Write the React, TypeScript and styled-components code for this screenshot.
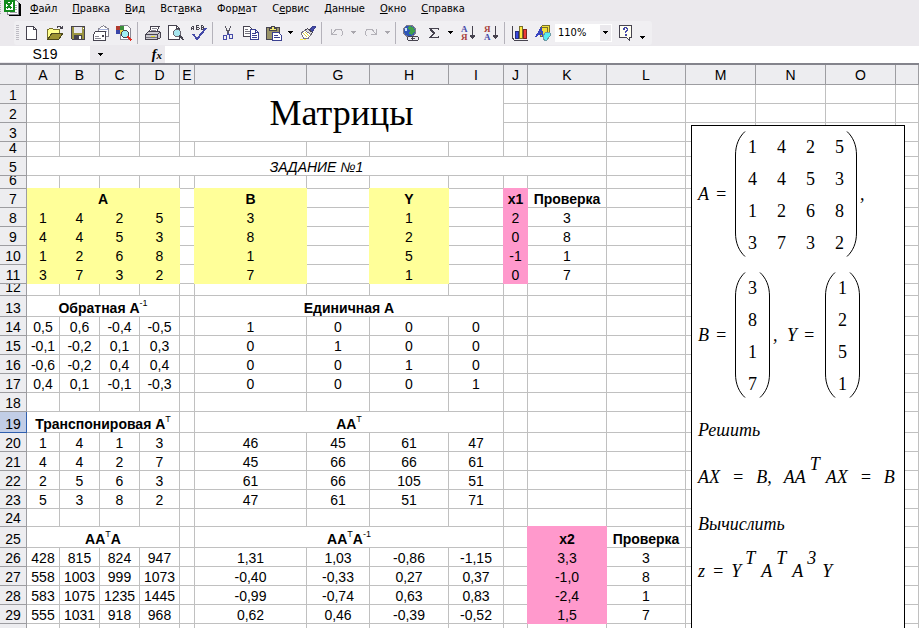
import React, { ReactNode } from 'react';
import styled, { createGlobalStyle, css } from 'styled-components';

const GRID = '#c0c0c0';
const CHROME = '#ebe9ed';
const HEAD = '#ededf0';
const HEAD_LINE = '#9d9da1';
const YELLOW = '#ffff99';
const PINK = '#ff99cc';

const GlobalStyle = createGlobalStyle`
  *, *::before, *::after { box-sizing: border-box; }
  html, body, #root { height: 100%; }
  body {
    margin: 0;
    overflow: hidden;
    background: #fff;
    color: #000;
    font-family: 'Liberation Sans', Arial, sans-serif;
  }
  button, input, select { font: inherit; color: inherit; border: 0; margin: 0; padding: 0; background: transparent; }
`;

const Window = styled.div`
  display: flex;
  flex-direction: column;
  height: 100vh;
  background: ${CHROME};
`;

const MenuBar = styled.nav`
  display: flex;
  align-items: center;
  height: 20px;
  flex: none;
  font: 11px/14px 'DejaVu Sans Condensed', 'DejaVu Sans', Tahoma, sans-serif;
`;

const BookIcon = styled.span`
  display: flex;
  width: 22px;
  height: 20px;
`;

const MenuItem = styled.button`
  height: 18px;
  padding: 0 7px 2px 8px;
  white-space: nowrap;
`;

const ToolRow = styled.div`
  display: flex;
  height: 26px;
  padding: 1px 0 1px 14px;
  flex: none;
`;

const ToolBar = styled.div`
  display: flex;
  align-items: center;
  padding: 0 4px 0 6px;
  border-radius: 3px;
  background: #f0eff2;
  position: relative;
`;

const Handle = styled.span`
  position: absolute;
  left: 2px;
  top: 4px;
  bottom: 4px;
  width: 3px;
  background: repeating-linear-gradient(#bdbbc3 0 1px, transparent 1px 2px);
`;

const ToolButton = styled.button`
  display: flex;
  align-items: center;
  justify-content: center;
  width: 23px;
  height: 22px;
`;

const DropButton = styled.button<{ $off?: boolean; $low?: boolean }>`
  display: flex;
  align-items: ${p => (p.$low ? 'flex-end' : 'center')};
  justify-content: center;
  width: 11px;
  height: 22px;
  padding-bottom: ${p => (p.$low ? 4 : 0)}px;
  color: ${p => (p.$off ? '#a9a7ad' : '#000')};
`;

const Divider = styled.span`
  width: 1px;
  height: 22px;
  margin: 0 3px 0 2px;
  background: #b4b2ba;
`;

const ZoomBox = styled.label`
  display: flex;
  align-items: center;
  position: relative;
  width: 57px;
  height: 18px;
  margin: 0 2px 0 1px;
  border: 1px solid #fff;
  background: linear-gradient(to left, ${CHROME} 11px, #fff 11px);
  svg { position: absolute; right: 2px; pointer-events: none; }
`;

const ZoomSelect = styled.select`
  appearance: none;
  width: 100%;
  padding-left: 2px;
  font: 11px/16px 'DejaVu Sans Condensed', 'DejaVu Sans', sans-serif;
`;

const FormulaRow = styled.div`
  display: flex;
  height: 17px;
  flex: none;
`;

const NameInput = styled.input`
  width: 90px;
  height: 16px;
  background: #fff;
  text-align: center;
  font-size: 14px;
`;

const NameDrop = styled.button`
  width: 20px;
  display: flex;
  align-items: center;
  justify-content: center;
`;

const FxButton = styled.button`
  width: 55px;
  padding: 0 3px 0 0;
  text-align: right;
  font: italic bold 14px/15px 'Liberation Serif', serif;
  span { font-size: 11px; }
`;

const FormulaInput = styled.input`
  flex: 1;
  min-width: 0;
  background: #fff;
`;

const SheetArea = styled.main`
  position: relative;
  flex: 1;
  min-height: 0;
  overflow: hidden;
  border-top: 2px solid #84848c;
  background: #fff;
`;

const Table = styled.table`
  width: 100%;
  table-layout: fixed;
  border-collapse: separate;
  border-spacing: 0;
  font-size: 14px;
  line-height: 16px;
`;

const ColHead = styled.th`
  height: 20px;
  padding: 0;
  border-right: 1px solid ${HEAD_LINE};
  border-bottom: 1px solid ${HEAD_LINE};
  background: ${HEAD};
  font-weight: 400;
`;

const RowHead = styled.th<{ $active?: boolean }>`
  position: relative;
  z-index: 1;
  padding: 0;
  font-weight: 400;
  border-right: 1px solid ${HEAD_LINE};
  border-bottom: 1px solid ${p => (p.$active ? '#2f5fae' : HEAD_LINE)};
  border-right-color: ${p => (p.$active ? '#2f5fae' : HEAD_LINE)};
  background: ${p => (p.$active ? '#c1cde6' : HEAD)};
`;

type Look = { $fill?: string; $bold?: boolean; $italic?: boolean; $title?: boolean };

const Cell = styled.td<Look>`
  padding: 0;
  border-right: 1px solid ${GRID};
  border-bottom: 1px solid ${GRID};
  font-weight: ${p => (p.$bold ? 700 : 400)};
  font-style: ${p => (p.$italic ? 'italic' : 'normal')};
  ${p =>
    p.$fill &&
    css`
      background: ${p.$fill};
      border-color: ${p.$fill};
      box-shadow: -1px 0 ${p.$fill}, 0 -1px ${p.$fill}, -1px -1px ${p.$fill};
    `}
  ${p =>
    p.$title &&
    css`
      text-align: center;
      vertical-align: middle;
      font: 36px/56px 'Liberation Serif', 'Times New Roman', serif;
    `}
  sup {
    font-size: 9px;
    font-weight: 400;
    line-height: 0;
    vertical-align: 7px;
  }
`;

const Content = styled.div<{ $h: number }>`
  display: flex;
  align-items: flex-end;
  justify-content: center;
  height: ${p => p.$h - 1}px;
  overflow: hidden;
  white-space: nowrap;
`;

const COLUMNS: [string, number | undefined][] = [
  ['A', 33], ['B', 40], ['C', 40], ['D', 40], ['E', 15], ['F', 112], ['G', 63], ['H', 79],
  ['I', 55], ['J', 24], ['K', 79], ['L', 79], ['M', 70], ['N', 70], ['O', 70], ['', undefined],
];

type CellSpec = {
  v: ReactNode;
  span?: number;
  rows?: number;
  fill?: string;
  bold?: boolean;
  italic?: boolean;
  title?: boolean;
};
type RowSpec = { h: number; cells?: Record<string, CellSpec>; covered?: string };

const values = (letters: string, line: string): Record<string, CellSpec> => {
  const parts = line.split(' ');
  return Object.fromEntries(letters.split('').map((l, i) => [l, { v: parts[i] }]));
};

const task = (a: string, b: string, y: string, x: string, check: string): RowSpec => {
  const cells = values('ABCDFHJK', [a, b, y, x, check].join(' '));
  'ABCDFH'.split('').forEach(l => (cells[l].fill = YELLOW));
  cells.J.fill = PINK;
  return { h: 19, cells };
};

const solved = (line: string): RowSpec => {
  const cells = values('ABCDFGHIKL', line);
  cells.K.fill = PINK;
  return { h: 19, cells };
};

const plain = (line: string): RowSpec => ({ h: 19, cells: values('ABCDFGHI', line) });

const ROWS: RowSpec[] = [
  { h: 19, cells: { E: { v: 'Матрицы', span: 5, rows: 3, title: true } } },
  { h: 19, covered: 'EFGHI' },
  { h: 19, covered: 'EFGHI' },
  { h: 15 },
  { h: 19, cells: { A: { v: 'ЗАДАНИЕ №1', span: 11, italic: true } } },
  { h: 13 },
  {
    h: 19,
    cells: {
      A: { v: 'A', span: 4, fill: YELLOW, bold: true },
      F: { v: 'B', fill: YELLOW, bold: true },
      H: { v: 'Y', fill: YELLOW, bold: true },
      J: { v: 'x1', fill: PINK, bold: true },
      K: { v: 'Проверка', bold: true },
    },
  },
  task('1 4 2 5', '3', '1', '2', '3'),
  task('4 4 5 3', '8', '2', '0', '8'),
  task('1 2 6 8', '1', '5', '-1', '1'),
  task('3 7 3 2', '7', '1', '0', '7'),
  { h: 12 },
  {
    h: 21,
    cells: {
      A: { v: <span>Обратная A<sup>-1</sup></span>, span: 4, bold: true },
      F: { v: 'Единичная A', span: 4, bold: true },
    },
  },
  plain('0,5 0,6 -0,4 -0,5 1 0 0 0'),
  plain('-0,1 -0,2 0,1 0,3 0 1 0 0'),
  plain('-0,6 -0,2 0,4 0,4 0 0 1 0'),
  plain('0,4 0,1 -0,1 -0,3 0 0 0 1'),
  { h: 19 },
  {
    h: 21,
    cells: {
      A: { v: <span>Транспонировая A<sup>T</sup></span>, span: 4, bold: true },
      F: { v: <span>AA<sup>T</sup></span>, span: 4, bold: true },
    },
  },
  plain('1 4 1 3 46 45 61 47'),
  plain('4 4 2 7 45 66 66 61'),
  plain('2 5 6 3 61 66 105 51'),
  plain('5 3 8 2 47 61 51 71'),
  { h: 18 },
  {
    h: 21,
    cells: {
      A: { v: <span>AA<sup>T</sup>A</span>, span: 4, bold: true },
      F: { v: <span>AA<sup>T</sup>A<sup>-1</sup></span>, span: 4, bold: true },
      K: { v: 'x2', fill: PINK, bold: true },
      L: { v: 'Проверка', bold: true },
    },
  },
  solved('428 815 824 947 1,31 1,03 -0,86 -1,15 3,3 3'),
  solved('558 1003 999 1073 -0,40 -0,33 0,27 0,37 -1,0 8'),
  solved('583 1075 1235 1445 -0,99 -0,74 0,63 0,83 -2,4 1'),
  solved('555 1031 918 968 0,62 0,46 -0,39 -0,52 1,5 7'),
  { h: 19 },
];

const ACTIVE_ROW = 19;

function Row({ spec, n }: { spec: RowSpec; n: number }) {
  const tds: ReactNode[] = [];
  for (let i = 0; i < COLUMNS.length; ) {
    const letter = COLUMNS[i][0];
    if (letter && spec.covered?.includes(letter)) {
      i += 1;
      continue;
    }
    const c = spec.cells?.[letter];
    tds.push(
      <Cell
        key={i}
        colSpan={c?.span}
        rowSpan={c?.rows}
        $fill={c?.fill}
        $bold={c?.bold}
        $italic={c?.italic}
        $title={c?.title}
      >
        {c?.title ? c.v : c && <Content $h={spec.h}>{c.v}</Content>}
      </Cell>,
    );
    i += c?.span ?? 1;
  }
  return (
    <tr>
      <RowHead scope="row" $active={n === ACTIVE_ROW}>
        <Content $h={spec.h}>{n}</Content>
      </RowHead>
      {tds}
    </tr>
  );
}

/* Drawing object with the task text */

const Drawing = styled.aside`
  position: absolute;
  left: 691px;
  top: 60px;
  width: 214px;
  min-height: 560px;
  padding: 5px 0 0 6px;
  border: 1px solid #000;
  background: #fff;
  font: italic 18px/20px 'Liberation Serif', 'Times New Roman', serif;
  white-space: nowrap;
`;

const Equation = styled.div`
  display: flex;
  align-items: center;
  height: 126px;
  & + & { margin-top: 15px; }
`;

const Lead = styled.span<{ $w: number }>`
  display: flex;
  gap: 6px;
  width: ${p => p.$w}px;
`;

const Comma = styled.span`
  width: 17px;
  padding-left: 3px;
`;

const MatrixBox = styled.span`
  display: flex;
  align-items: center;
`;

const MatrixGrid = styled.span<{ $cols: number }>`
  display: grid;
  grid-template-columns: repeat(${p => p.$cols}, 9px);
  column-gap: 20px;
  padding: 2px 2px 0;
  font-style: normal;
  line-height: 32px;
`;

const Notes = styled.div`
  padding-top: 9px;
`;

const Line = styled.p<{ $gap?: number }>`
  display: flex;
  gap: ${p => p.$gap ?? 0}px;
  margin: 0;
  line-height: 47px;
  sup {
    font-size: 18px;
    line-height: 0;
    vertical-align: 13px;
    padding: 0 6px 0 4px;
  }
`;

function Paren({ right }: { right?: boolean }) {
  return (
    <svg width="11" height="126" viewBox="0 0 11 126" fill="none" stroke="#000" aria-hidden="true">
      <path d={right ? 'M1 .5C7 6 10.500 14 10.500 24V102C10.500 112 7 120 1 125.500' : 'M10 .5C4 6 .5 14 .5 24V102C.5 112 4 120 10 125.500'} />
    </svg>
  );
}

function Matrix({ rows }: { rows: string[] }) {
  return (
    <MatrixBox>
      <Paren />
      <MatrixGrid $cols={rows[0].length}>
        {rows.join('').split('').map((d, i) => <span key={i}>{d}</span>)}
      </MatrixGrid>
      <Paren right />
    </MatrixBox>
  );
}

function TaskDrawing() {
  return (
    <Drawing>
      <Equation>
        <Lead $w={37}><span>A</span><span>=</span></Lead>
        <Matrix rows={['1425', '4453', '1268', '3732']} />
        <Comma>,</Comma>
      </Equation>
      <Equation>
        <Lead $w={37}><span>B</span><span>=</span></Lead>
        <Matrix rows={['3', '8', '1', '7']} />
        <Comma>,</Comma>
        <Lead $w={38}><span>Y</span><span>=</span></Lead>
        <Matrix rows={['1', '2', '5', '1']} />
      </Equation>
      <Notes>
        <Line>Решить</Line>
        <Line $gap={12}><span>AX</span><span>=</span><span>B,</span><span>AA<sup>T</sup>AX</span><span>=</span><span>B</span></Line>
        <Line>Вычислить</Line>
        <Line $gap={7}><span>z</span><span>=</span><span>Y<sup>T</sup>A<sup>T</sup>A<sup>3</sup>Y</span></Line>
      </Notes>
    </Drawing>
  );
}

/* Icons */

const Caret = () => (
  <svg width="7" height="4" viewBox="0 0 7 4" shapeRendering="crispEdges" aria-hidden="true">
    <path d="M1 0h5v1H1zM2 1h3v1H2zM3 2h1v1H3z" fill="currentColor" />
  </svg>
);

function Icon({ children }: { children: ReactNode }) {
  return (
    <svg width="16" height="16" viewBox="0 0 16 16" fill="none" shapeRendering="crispEdges" aria-hidden="true">
      {children}
    </svg>
  );
}

const Letter = styled.text<{ $mono?: boolean }>`
  font-family: ${p => (p.$mono ? "'Liberation Sans'" : "'Liberation Serif'")}, serif;
  font-weight: 700;
`;

const icons: Record<string, ReactNode> = {
  new: <Icon><path d="M2.500 1.500h7l3 3v10h-10z" fill="#fff" stroke="#46434f" /><path d="M9.500 1.500v3h3" stroke="#46434f" /></Icon>,
  open: (
    <Icon>
      <path d="M.5 13.500v-9h1l1-1h3l1 1h6v4" fill="#ffff8c" stroke="#77702c" />
      <path d="M1 14l4-6h11l-4 6z" fill="#9c9331" stroke="#4d4a1c" />
      <path d="M9.500 2.500h1v-1h3v1h1v1M15.500 1v3M13 3.500h3" stroke="#46434f" />
    </Icon>
  ),
  save: (
    <Icon>
      <path d="M1.500 1.500h13v13h-12l-1-1z" fill="#9a9440" stroke="#46434f" />
      <path d="M4 2h8v6H4z" fill="#e9e8ef" /><path d="M4 10h8v4H4z" fill="#46434f" /><path d="M9 11h2v3H9z" fill="#fff" />
      <path d="M13 3h1v1h-1z" fill="#fff" />
    </Icon>
  ),
  mail: (
    <Icon>
      <path d="M5.500 9V4l5-3.500 5 3.500v7h-5" fill="#fff" stroke="#8a8894" /><path d="M6 4h9M7 6h7" stroke="#a8b4dd" />
      <path d="M.5 9.500l2-3h10v9H.5z" fill="#fff" stroke="#46434f" /><path d="M2 11.500h4M2 13.500h6" stroke="#8a8894" />
      <path d="M9 10h2v2H9z" fill="#46434f" />
    </Icon>
  ),
  research: (
    <Icon>
      <path d="M4.500 .5h7l3 3v11h-10z" fill="#fff" stroke="#8a8894" />
      <path d="M0 1h4v4H0z" fill="#b03a2e" /><path d="M4 1h4v4H4z" fill="#3c8f3c" />
      <path d="M0 5h4v4H0z" fill="#3945a8" /><path d="M4 5h4v4H4z" fill="#e2d63c" />
      <circle cx="9" cy="9" r="3.500" fill="#9feef2" stroke="#46434f" /><path d="M11.500 11.500l4 4" stroke="#e02b20" strokeWidth="2" />
    </Icon>
  ),
  print: (
    <Icon>
      <path d="M4.500 6.500l1.500-5h8l-2 5" fill="#fff" stroke="#46434f" /><path d="M7 3.500h5M6 5.500h5" stroke="#8a8894" />
      <path d="M.5 9.500l3-3h11l1 1v5l-3 2H.5z" fill="#c9c8ce" stroke="#46434f" /><path d="M1 9.500h11l3-2M12.500 10v4" stroke="#46434f" />
      <path d="M6 11h4v1H6z" fill="#e5dc2e" /><path d="M1 12h11v1H1z" fill="#77757f" />
    </Icon>
  ),
  preview: (
    <Icon>
      <path d="M.5 .5h8l3 3v11H.5z" fill="#fff" stroke="#46434f" /><path d="M8.500 .5v3h3" stroke="#46434f" />
      <circle cx="9" cy="8" r="3.500" fill="#a6e6ee" stroke="#66646e" /><path d="M11.500 10.500l4 4.500" stroke="#46434f" strokeWidth="2" />
    </Icon>
  ),
  spell: (
    <Icon>
      <path d="M.5 5V2.500L1.500 1h1v4M1 3.500h1M5.500 0v5M5 .5h3M5 2.500h3M5 4.500h3M8.500 3v1M10.500 0v5M10 .5h2M10 2.500h3M10 4.500h2M12.500 1v1M12.500 3v1" stroke="#46434f" />
      <path d="M2 9l4 5 9-11" stroke="#444aa8" strokeWidth="2" />
    </Icon>
  ),
  cut: (
    <Icon>
      <path d="M5 1l4 9M11 1l-4 9" stroke="#5a5863" />
      <rect x="3.500" y="10.500" width="3" height="4" stroke="#444aa8" /><rect x="9.500" y="9.500" width="3" height="4" stroke="#444aa8" />
      <path d="M6.500 10.500l2-2 1 2" stroke="#444aa8" />
    </Icon>
  ),
  copy: (
    <Icon>
      <path d="M.5 1.500h6l2 2v8h-8z" fill="#fff" stroke="#46434f" /><path d="M2 4.500h3M2 6.500h5M2 8.500h5" stroke="#77757f" />
      <path d="M7.500 4.500h5l3 3v7h-8z" fill="#fff" stroke="#3a4090" /><path d="M12.500 4.500v3h3M9 8.500h4M9 10.500h5M9 12.500h5" stroke="#3a4090" />
    </Icon>
  ),
  paste: (
    <Icon>
      <rect x=".5" y="2.500" width="13" height="12" rx="1" fill="#9a9468" stroke="#46434f" />
      <path d="M3.500 5.500v-2h2v-2h3v2h2v2z" fill="#f2ea74" stroke="#46434f" />
      <path d="M6.500 7.500h6l3 3v5h-9z" fill="#fff" stroke="#3a4090" /><path d="M8 10.500h4M8 12.500h6" stroke="#3a4090" />
    </Icon>
  ),
  painter: (
    <Icon>
      <path d="M10 5l3-4h2v2l-3 4z" fill="#444aa8" stroke="#3a4090" />
      <path d="M7.500 3.500l5 4-2 2-5.500-4z" fill="#d8d7dc" stroke="#46434f" />
      <path d="M5 5.500l6 4-3 4H4L1 8z" fill="#fff" stroke="#77757f" /><path d="M3 8l4 4M5 7l4 4" stroke="#e2d63c" />
      <path d="M0 14.500h3M4 14.500h2" stroke="#ffef3c" />
    </Icon>
  ),
  undo: <Icon><path d="M2.500 4v5.500H8M3 9l4-4.500h5l1.500 2v3l-1.500 1.500" stroke="#b3b1b8" /></Icon>,
  redo: <Icon><path d="M13.500 4v5.500H8M13 9L9 4.500H4L2.500 6.500v3L4 11" stroke="#b3b1b8" /></Icon>,
  link: (
    <Icon>
      <circle cx="6.500" cy="6" r="6" fill="#2f57b8" stroke="#7d7b8c" /><path d="M6 1l4 1 2 4-3 4-3-1 1-3-2-2z" fill="#3fa04a" />
      <path d="M2 3h2v3H2z" fill="#c9e4ff" />
      <rect x="4.500" y="11.500" width="6" height="4" rx="2" fill="#e9e8ef" stroke="#46434f" />
      <rect x="9.500" y="11.500" width="6" height="4" rx="2" fill="#e9e8ef" stroke="#46434f" /><path d="M8 13.500h4" stroke="#46434f" />
    </Icon>
  ),
  sum: <Icon><path d="M12.500 5V3.500H4L8.500 8 4 12.500h8.500V11" stroke="#46434f" /><path d="M4 3.500L8 8" stroke="#46434f" strokeWidth="2" /></Icon>,
  asc: (
    <Icon>
      <Letter x="1" y="7" fontSize="9" fill="#444aa8">А</Letter><Letter x="1" y="15" fontSize="9" fill="#a8403c">Я</Letter>
      <path d="M12.500 1v13M10 10.500h5M11 12.500h3M10 11.500h5" stroke="#46434f" />
    </Icon>
  ),
  desc: (
    <Icon>
      <Letter x="1" y="7" fontSize="9" fill="#a8403c">Я</Letter><Letter x="1" y="15" fontSize="9" fill="#444aa8">А</Letter>
      <path d="M12.500 1v13M10 10.500h5M11 12.500h3M10 11.500h5" stroke="#46434f" />
    </Icon>
  ),
  chart: (
    <Icon>
      <path d="M.5 1v12l2 2.500H16" stroke="#46434f" /><path d="M3.500 6.500h3v7h-3z" fill="#3a47dc" stroke="#26307e" />
      <path d="M7.500 1.500h3v12h-3z" fill="#ffe940" stroke="#77702c" /><path d="M11.500 4.500h3v9h-3z" fill="#ee3b35" stroke="#7d2522" />
    </Icon>
  ),
  shapes: (
    <Icon>
      <path d="M5.500 2.500l2-2h7v9l-2 2h-7z" fill="#f2df3a" stroke="#77702c" /><path d="M12.500 11V2.500h-6" stroke="#77702c" />
      <path d="M1 12L6 4l2 8M3 9h5" stroke="#3945c0" strokeWidth="2" />
      <path d="M8 11l3-4 4 1v3l-4 5-3-2z" fill="#57eef2" stroke="#6c9aa4" />
    </Icon>
  ),
  help: (
    <Icon>
      <path d="M1.500 .5h12v12h-2v3l-3-3h-7z" fill="#fffff0" stroke="#46434f" />
      <path d="M5 3h1V2h3v1h1v3H9v1H8v1H7V6h1V5h1V4H8V3H7v2H5zM7 9h2v2H7z" fill="#444aa8" />
    </Icon>
  ),
};

const Tool = ({ id, label }: { id: string; label: string }) => (
  <ToolButton type="button" aria-label={label}>{icons[id]}</ToolButton>
);

const Drop = ({ off, low, label }: { off?: boolean; low?: boolean; label: string }) => (
  <DropButton type="button" $off={off} $low={low} aria-label={label}><Caret /></DropButton>
);

const MENUS: [string, string, string][] = [
  ['', 'Ф', 'айл'], ['', 'П', 'равка'], ['', 'В', 'ид'], ['Вст', 'а', 'вка'], ['Фор', 'м', 'ат'],
  ['С', 'е', 'рвис'], ['', 'Д', 'анные'], ['', 'О', 'кно'], ['', 'С', 'правка'],
];

export default function App() {
  return (
    <Window>
      <GlobalStyle />
      <MenuBar aria-label="Меню">
        <BookIcon>
          <svg width="22" height="20" viewBox="0 0 22 20" shapeRendering="crispEdges" aria-hidden="true">
            <path d="M0 1h1M0 3h1M0 5h1M0 7h1M0 9h1M0 11h1M0 13h1" stroke="#aaa8b0" />
            <path d="M8 2h10l3 2v12H9z" fill="#000" />
            <path d="M7.500 .5h9l2 2v12h-11z" fill="#fff" stroke="#8a8894" />
            <path d="M15 5h2M15 7h2M15 9h2M10 12h7" stroke="#a8a6ae" />
            <path d="M4.500 .5h9v10h-9z" fill="#fff" stroke="#128a1c" strokeWidth="2" />
            <path d="M6.500 2.500l5 6M11.500 2.500l-5 6" stroke="#128a1c" strokeWidth="2" />
          </svg>
        </BookIcon>
        {MENUS.map(([before, key, after]) => (
          <MenuItem type="button" key={before + key + after}>{before}<u>{key}</u>{after}</MenuItem>
        ))}
      </MenuBar>
      <ToolRow>
        <ToolBar role="toolbar" aria-label="Стандартная">
          <Handle />
          <Tool id="new" label="Создать" />
          <Tool id="open" label="Открыть" />
          <Tool id="save" label="Сохранить" />
          <Tool id="mail" label="Сообщение" />
          <Tool id="research" label="Поиск" />
          <Divider />
          <Tool id="print" label="Печать" />
          <Tool id="preview" label="Предварительный просмотр" />
          <Tool id="spell" label="Орфография" />
          <Divider />
          <Tool id="cut" label="Вырезать" />
          <Tool id="copy" label="Копировать" />
          <Tool id="paste" label="Вставить" />
          <Drop label="Параметры вставки" />
          <Tool id="painter" label="Формат по образцу" />
          <Divider />
          <Tool id="undo" label="Отменить" />
          <Drop off label="Список отмены" />
          <Tool id="redo" label="Вернуть" />
          <Drop off label="Список возврата" />
          <Divider />
          <Tool id="link" label="Гиперссылка" />
          <Tool id="sum" label="Автосумма" />
          <Drop label="Функции" />
          <Tool id="asc" label="Сортировка по возрастанию" />
          <Tool id="desc" label="Сортировка по убыванию" />
          <Divider />
          <Tool id="chart" label="Мастер диаграмм" />
          <Tool id="shapes" label="Рисование" />
          <ZoomBox>
            <ZoomSelect aria-label="Масштаб" defaultValue="110%"><option>110%</option></ZoomSelect>
            <Caret />
          </ZoomBox>
          <Tool id="help" label="Справка" />
          <Drop low label="Параметры панели" />
        </ToolBar>
      </ToolRow>
      <FormulaRow>
        <NameInput aria-label="Имя" defaultValue="S19" />
        <NameDrop type="button" aria-label="Список имён"><Caret /></NameDrop>
        <FxButton type="button">f<span>x</span></FxButton>
        <FormulaInput aria-label="Строка формул" />
      </FormulaRow>
      <SheetArea>
        <Table>
          <colgroup>
            <col width={27} />
            {COLUMNS.map(([, w], i) => <col key={i} width={w} />)}
          </colgroup>
          <thead>
            <tr>
              <ColHead />
              {COLUMNS.map(([name], i) => <ColHead scope="col" key={i}>{name}</ColHead>)}
            </tr>
          </thead>
          <tbody>
            {ROWS.map((spec, i) => <Row key={i} spec={spec} n={i + 1} />)}
          </tbody>
        </Table>
        <TaskDrawing />
      </SheetArea>
    </Window>
  );
}
